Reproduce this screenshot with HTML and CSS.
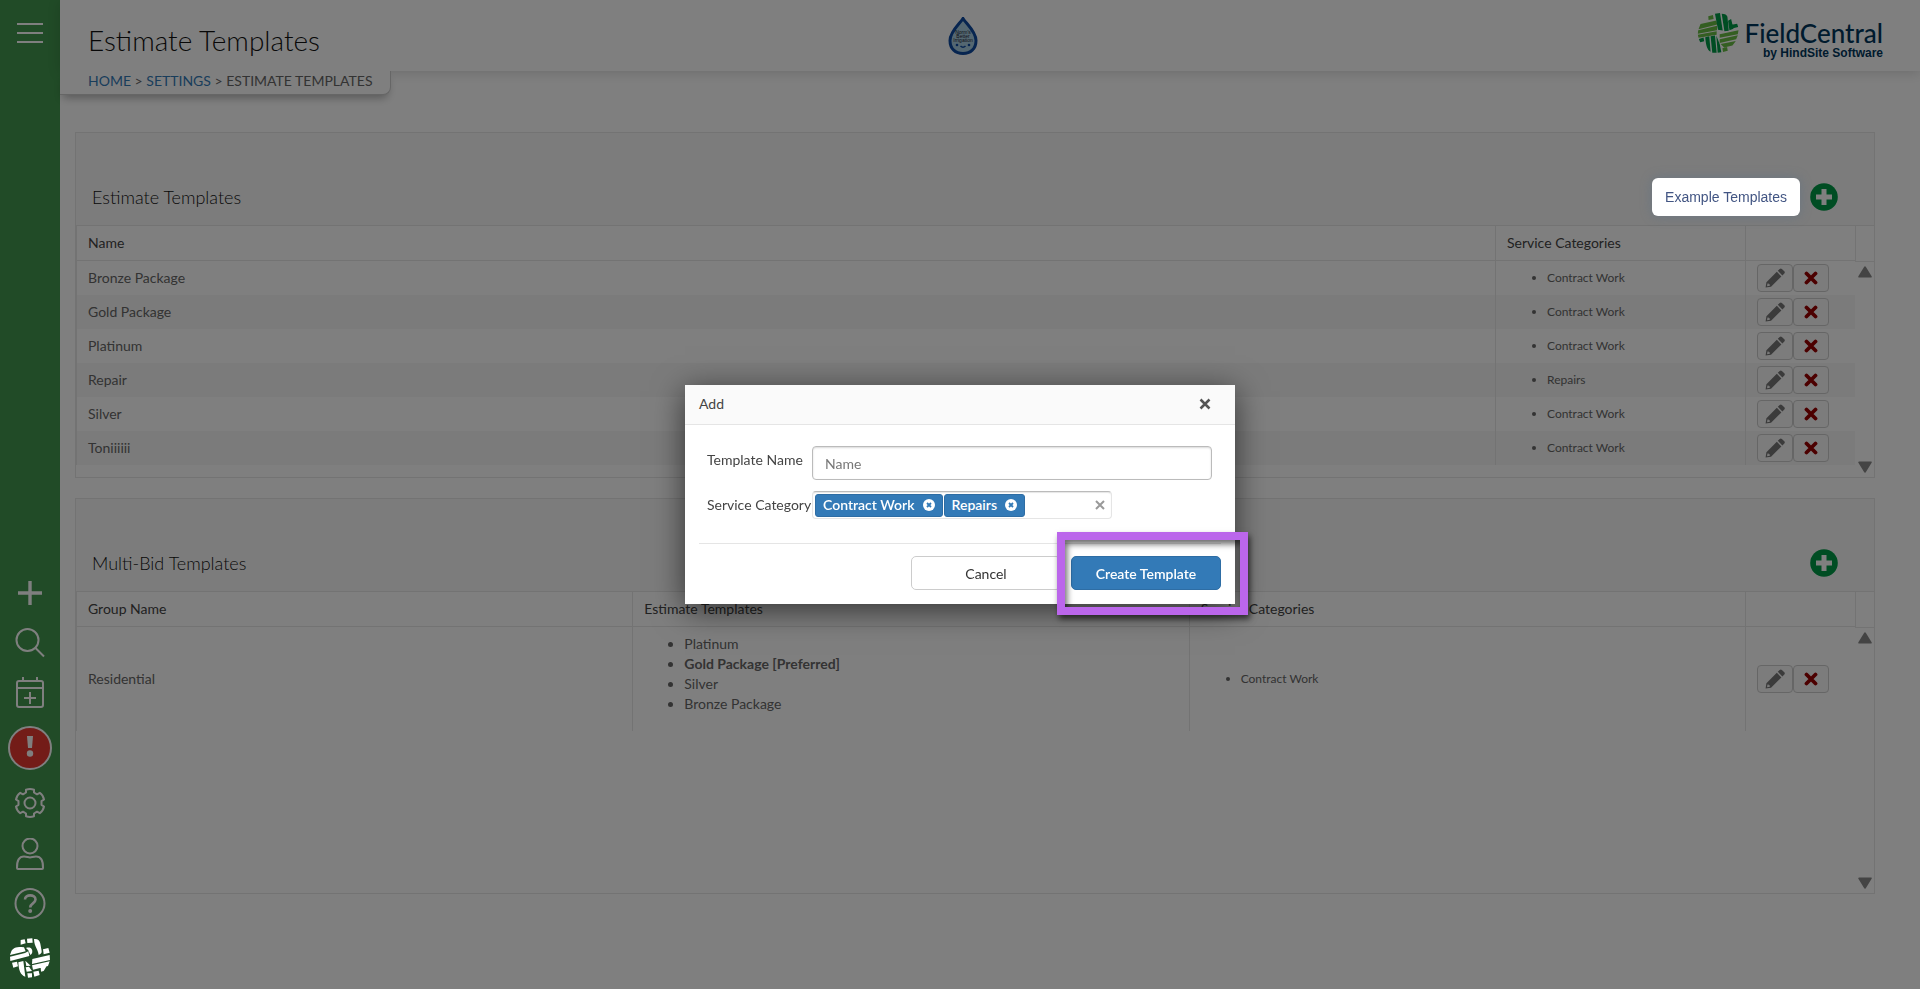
FILE: index.html
```html
<!DOCTYPE html>
<html lang="en">
<head>
  <meta charset="UTF-8">
  <title>Estimate Templates</title>
  <link rel="stylesheet" href="styles.css">
</head>
<body>

<!-- Shared icons -->
<svg class="sprite" width="0" height="0" aria-hidden="true">
  <symbol id="pencil" viewBox="0 0 20 20">
    <path d="M1.400 14.200 11.800 3.800l4.600 4.600L6 18.700l-5.400.8zM12.800 2.800l1.900-1.900c.7-.7 1.500-.7 2.200 0l2.400 2.400c.7.7.7 1.500 0 2.200l-1.900 1.900z"/>
    <path d="M2.500 15.400 2 18.200l2.800-.5v-1.500H3.700v-.8z" fill="#f7f7f7"/>
  </symbol>
  <symbol id="cross" viewBox="0 0 14 14">
    <path d="M2.500 2.500 11.500 11.500M11.500 2.500 2.500 11.500" stroke="#900" stroke-width="3.8" stroke-linecap="round"/>
  </symbol>
  <symbol id="add" viewBox="0 0 28 28">
    <circle cx="14" cy="14" r="13.8" fill="#009a47"/>
    <path d="M14 6v16M6 14h16" stroke="#fff" stroke-width="5"/>
  </symbol>
  <symbol id="remove" viewBox="0 0 12 12">
    <circle cx="6" cy="6" r="6" fill="#fff"/>
    <path d="M4 4l4 4M8 4 4 8" stroke="#337ab7" stroke-width="1.8"/>
  </symbol>
  <symbol id="up" viewBox="0 0 12 10">
    <path d="M6 1 11 9H1z" fill="#888" stroke="#888" stroke-width="1.6" stroke-linejoin="round"/>
  </symbol>
  <symbol id="down" viewBox="0 0 12 10">
    <path d="M6 9 11 1H1z" fill="#888" stroke="#888" stroke-width="1.6" stroke-linejoin="round"/>
  </symbol>
</svg>

<!-- Sidebar -->
<nav class="sidebar">
  <button class="side-btn" aria-label="Menu">
    <svg width="26" height="22" viewBox="0 0 26 22"><path d="M0 2h26M0 11h26M0 20h26"/></svg>
  </button>
  <div class="side-group">
    <button class="side-btn" aria-label="Add">
      <svg width="32" height="32" viewBox="0 0 32 32"><path d="M16 5v24M4 17h24" stroke-width="3.4"/></svg>
    </button>
    <button class="side-btn" aria-label="Search">
      <svg width="32" height="32" viewBox="0 0 32 32"><circle cx="13.500" cy="14" r="11"/><path d="M21.500 22l8.500 8.500"/></svg>
    </button>
    <button class="side-btn" aria-label="Schedule">
      <svg width="32" height="32" viewBox="0 0 32 32"><rect x="3" y="5" width="26" height="26" rx="2"/><path d="M3 12h26M9 1v4M23 1v4M16 16v12M10 22h12"/></svg>
    </button>
    <button class="side-btn" aria-label="Alerts">
      <svg width="44" height="44" viewBox="0 0 44 44"><circle cx="22" cy="22" r="21" fill="#e63930"/><path d="M19 10h6l-1 12h-4z" fill="#fff" stroke="none"/><circle cx="22" cy="27.500" r="3.200" fill="#fff" stroke="none"/></svg>
    </button>
    <button class="side-btn" aria-label="Settings">
      <svg width="32" height="32" viewBox="0 0 32 32" stroke-linejoin="round"><circle cx="16" cy="15" r="5.500"/><path d="M12 4.500V1.700q4-1.200 8 0v2.800l3 1.800 2.800-1.500q3.500 2.600 4.200 6.700l-2.500 1.700v3.600l2.500 1.700q-.7 4.100-4.200 6.700L23 23.700l-3 1.800v2.800q-4 1.200-8 0v-2.800l-3-1.800-2.800 1.500Q2.700 22.600 2 18.500l2.500-1.700v-3.600L2 11.500q.7-4.100 4.200-6.700L9 6.300z"/></svg>
    </button>
    <button class="side-btn" aria-label="Account">
      <svg width="32" height="32" viewBox="0 1 32 32"><circle cx="16" cy="9" r="7.500"/><path d="M3 31q-.3-11.500 7-11.500c3 0 4 1 6 1s3-1 6-1q7.300 0 7 11.500Q29 32 28 32H4Q3 32 3 31z"/></svg>
    </button>
    <button class="side-btn" aria-label="Help">
      <svg width="32" height="32" viewBox="0 0 32 32"><circle cx="16" cy="15.500" r="14.500"/><path d="M11 11.500c0-5.500 10.500-5.500 10.500 0 0 4-5.300 3.700-5.300 8" stroke-width="2.600"/><circle cx="16.200" cy="23" r="2" fill="#fff" stroke="none"/></svg>
    </button>
    <svg class="side-logo" width="40" height="40" viewBox="30 1134 120 120">
      <path d="M62 1140l12-2 3 12-15 4zM81 1136l16-1 1 13-16 1zM102 1137c12-1 17 4 19 14l4 22c1 7-4 9-9 12-2-20-13-22-14-48zM129 1168l16-4 4 14-18 5zM34 1174c4-9 12-13 30-13l8 1 5 12-47 11zM30 1190l45-11 10-5 3 14-57 15zM78 1164c7-2 13-2 17 3 4 7 2 15-4 18l-6-14zM97 1197l52-12 1 15-54 12zM96 1216l53-12-5 14-45 11zM36 1208l15-3 3 14-14 4zM55 1207l15-4 6 47c-15-4-20-20-21-43zM76 1202l16 15-13 1zM77 1222l10-2 9 13-16 2zM82 1240h14v12l-12 1zM100 1235l16-3 3 13-16 5zM122 1222l18-4-9 15-8 2z" fill="#fff"/>
    </svg>
  </div>
</nav>

<div class="page">
  <header class="topbar">
    <h1>Estimate Templates</h1>
    <svg class="drop" width="30" height="38" viewBox="0 0 30 38" role="img" aria-label="Company logo">
      <path d="M15 1.500c3 5 13 13 13 22C28 32 22.500 36.500 15 36.500S2 32 2 23.500C2 14.500 12 6.500 15 1.500z" fill="#a9cfe2" stroke="#0f4aa0" stroke-width="3"/>
      <g font-family="Liberation Sans" font-size="5" fill="#223" text-anchor="middle">
        <text x="15" y="17">Norm's</text><text x="15" y="21">Better</text><text x="15" y="25">Irrigation</text>
      </g>
      <circle cx="9" cy="28" r="1.300" fill="#0f4aa0"/><circle cx="21" cy="28" r="1.300" fill="#0f4aa0"/>
      <path d="M12.500 29q2.500 2.500 5 0" fill="none" stroke="#0f4aa0" stroke-width="1.500"/>
    </svg>
    <div class="brand">
      <svg width="42" height="40" viewBox="170 35 124 119">
        <path d="M203 45l14-4 2 12-15 3zM180 68l47-11 3 12-56 14zM173 86l56-13v13l-57 11zM237 98l56-12-2 12-54 11zM237 113l54-12-5 12-49 11zM240 127l45-9-10 14-25 6zM172 100l56-11v11l-54 9zM245 140l14-4 2 11-14 4z" fill="#69bd45"/>
        <path d="M223 37l15-2 8 52-14-2zM243 37c10 0 15 3 17 9l4 42-13 1zM262 58l9-5 7 29-12 4zM272 70l17-3 3 10-18 4zM175 112l14-4 2 11-12 3zM194 107l12-3 4 46c-10-5-14-18-16-43zM210 104l13-2 5 51h-13zM227 102l10 25 5 25-11 1z" fill="#009a47"/>
      </svg>
      <div class="brand-text">
        <span class="brand-name">FieldCentral</span>
        <span class="brand-sub">by HindSite Software</span>
      </div>
    </div>
  </header>
  <nav class="crumbs"><a href="#">HOME</a> &gt; <a href="#">SETTINGS</a> &gt; ESTIMATE TEMPLATES</nav>

  <main>
    <!-- Estimate templates -->
    <section class="panel">
      <div class="panel-head">
        <h2>Estimate Templates</h2>
        <button class="example-btn">Example Templates</button>
        <button class="add-btn" aria-label="Add template"><svg width="28" height="28"><use href="#add"/></svg></button>
      </div>
      <div class="grid">
        <div class="grid-main">
          <table>
            <colgroup><col><col class="col-cat"><col class="col-act"></colgroup>
            <thead><tr><th>Name</th><th>Service Categories</th><th></th></tr></thead>
            <tbody>
              <tr><td>Bronze Package</td><td><ul class="small"><li>Contract Work</li></ul></td><td><div class="actions"><button aria-label="Edit"><svg width="20" height="20"><use href="#pencil"/></svg></button><button aria-label="Delete"><svg width="14" height="14"><use href="#cross"/></svg></button></div></td></tr>
              <tr><td>Gold Package</td><td><ul class="small"><li>Contract Work</li></ul></td><td><div class="actions"><button aria-label="Edit"><svg width="20" height="20"><use href="#pencil"/></svg></button><button aria-label="Delete"><svg width="14" height="14"><use href="#cross"/></svg></button></div></td></tr>
              <tr><td>Platinum</td><td><ul class="small"><li>Contract Work</li></ul></td><td><div class="actions"><button aria-label="Edit"><svg width="20" height="20"><use href="#pencil"/></svg></button><button aria-label="Delete"><svg width="14" height="14"><use href="#cross"/></svg></button></div></td></tr>
              <tr><td>Repair</td><td><ul class="small"><li>Repairs</li></ul></td><td><div class="actions"><button aria-label="Edit"><svg width="20" height="20"><use href="#pencil"/></svg></button><button aria-label="Delete"><svg width="14" height="14"><use href="#cross"/></svg></button></div></td></tr>
              <tr><td>Silver</td><td><ul class="small"><li>Contract Work</li></ul></td><td><div class="actions"><button aria-label="Edit"><svg width="20" height="20"><use href="#pencil"/></svg></button><button aria-label="Delete"><svg width="14" height="14"><use href="#cross"/></svg></button></div></td></tr>
              <tr><td>Toniiiiii</td><td><ul class="small"><li>Contract Work</li></ul></td><td><div class="actions"><button aria-label="Edit"><svg width="20" height="20"><use href="#pencil"/></svg></button><button aria-label="Delete"><svg width="14" height="14"><use href="#cross"/></svg></button></div></td></tr>
            </tbody>
          </table>
        </div>
        <div class="scroller">
          <svg width="14" height="12"><use href="#up"/></svg>
          <svg width="14" height="12"><use href="#down"/></svg>
        </div>
      </div>
    </section>

    <!-- Multi-bid templates -->
    <section class="panel">
      <div class="panel-head">
        <h2>Multi-Bid Templates</h2>
        <button class="add-btn" aria-label="Add group"><svg width="28" height="28"><use href="#add"/></svg></button>
      </div>
      <div class="grid grid-tall">
        <div class="grid-main">
          <table>
            <colgroup><col><col><col><col class="col-act"></colgroup>
            <thead><tr><th>Group Name</th><th>Estimate Templates</th><th>Service Categories</th><th></th></tr></thead>
            <tbody>
              <tr>
                <td>Residential</td>
                <td><ul class="bids"><li>Platinum</li><li><b>Gold Package [Preferred]</b></li><li>Silver</li><li>Bronze Package</li></ul></td>
                <td><ul class="small"><li>Contract Work</li></ul></td>
                <td><div class="actions"><button aria-label="Edit"><svg width="20" height="20"><use href="#pencil"/></svg></button><button aria-label="Delete"><svg width="14" height="14"><use href="#cross"/></svg></button></div></td>
              </tr>
            </tbody>
          </table>
        </div>
        <div class="scroller">
          <svg width="14" height="12"><use href="#up"/></svg>
          <svg width="14" height="12"><use href="#down"/></svg>
        </div>
      </div>
    </section>
  </main>
</div>

<!-- Add dialog -->
<div class="backdrop"></div>
<div class="modal-wrap">
  <form class="modal" role="dialog" aria-labelledby="modalTitle">
    <div class="modal-head">
      <span id="modalTitle">Add</span>
      <button type="button" class="close-btn" aria-label="Close">
        <svg width="12" height="12" viewBox="0 0 12 12"><path d="M1.500 1.500l9 9M10.500 1.500l-9 9" stroke="#555" stroke-width="2.500"/></svg>
      </button>
    </div>
    <div class="modal-body">
      <div class="field">
        <label for="name">Template Name</label>
        <input id="name" class="name-input" type="text" placeholder="Name">
      </div>
      <div class="field">
        <label for="category">Service Category</label>
        <div class="multi">
          <span class="chip">Contract Work <button type="button" aria-label="Remove Contract Work"><svg width="12" height="12"><use href="#remove"/></svg></button></span>
          <span class="chip">Repairs <button type="button" aria-label="Remove Repairs"><svg width="12" height="12"><use href="#remove"/></svg></button></span>
          <input id="category" type="text">
          <button type="button" class="clear-btn" aria-label="Clear">
            <svg width="10" height="10" viewBox="0 0 10 10"><path d="M1 1l8 8M9 1 1 9" stroke="#999" stroke-width="2"/></svg>
          </button>
        </div>
      </div>
    </div>
    <div class="modal-foot">
      <button type="button" class="btn">Cancel</button>
      <button type="submit" class="btn btn-primary">Create Template</button>
    </div>
    <div class="highlight"></div>
  </form>
</div>

</body>
</html>
```
FILE: styles.css
```css
* {
  box-sizing: border-box;
}

body {
  margin: 0;
  display: flex;
  min-height: 100vh;
  font-family: Lato, sans-serif;
  font-size: 14px;
  line-height: 20px;
  color: #666;
  background-color: #fff;
}

button {
  padding: 0;
  border: none;
  background: none;
  font-family: inherit;
  font-size: 14px;
  color: inherit;
  cursor: pointer;
}

svg {
  display: block;
}

.sprite {
  position: absolute;
}

h1, h2 {
  margin: 0;
  font-weight: 300;
}

a {
  color: #337ab7;
  text-decoration: none;
}

/* Sidebar */
.sidebar {
  width: 60px;
  padding: 22px 0 11px;
  display: flex;
  flex-direction: column;
  align-items: center;
  justify-content: space-between;
  background-color: #42964e;
}

.side-group {
  display: flex;
  flex-direction: column;
  align-items: center;
  gap: 18px;
}

.side-btn svg {
  fill: none;
  stroke: #fff;
  stroke-width: 2;
}

.side-logo {
  position: relative;
  z-index: 20;
}

/* Header */
.page {
  flex: 1;
}

.topbar {
  height: 71px;
  padding: 0 37px 0 28px;
  display: grid;
  grid-template-columns: 19fr auto 20fr;
  align-items: center;
  box-shadow: 0 2px 12px rgba(0, 0, 0, 0.15);
}

.topbar h1 {
  padding-top: 8px;
  font-size: 28px;
  line-height: 36px;
  color: #111;
}

.brand {
  justify-self: end;
  display: flex;
  align-items: flex-start;
  gap: 6px;
}

.brand-text {
  display: flex;
  flex-direction: column;
  align-items: flex-end;
  padding-top: 6px;
  color: #00365c;
}

.brand-name {
  font-size: 26px;
  line-height: 28px;
  font-weight: 500;
}

.brand-sub {
  font-family: "Liberation Sans", sans-serif;
  font-size: 12px;
  line-height: 12px;
  font-weight: bold;
}

.crumbs {
  position: relative;
  width: fit-content;
  height: 24px;
  padding: 0 18px 0 28px;
  border: 1px solid #ccc;
  border-width: 0 1px 1px 0;
  border-radius: 0 0 8px 0;
  background-color: #fff;
  box-shadow: 0 6px 8px -3px rgba(0, 0, 0, 0.3);
}

/* Panels */
main {
  padding: 37px 45px 20px 15px;
  display: flex;
  flex-direction: column;
  gap: 20px;
}

.panel {
  border: 1px solid #e6e6e6;
}

.panel-head {
  height: 92px;
  padding: 44px 36px 9px 16px;
  display: flex;
  align-items: center;
  gap: 10px;
  background-color: #f9f9f9;
}

.panel-head h2 {
  flex: 1;
  font-size: 18px;
  color: #111;
}

.example-btn {
  position: relative;
  z-index: 20;
  height: 38px;
  padding: 0 13px;
  border-radius: 6px;
  background-color: #fff;
  font-family: "Liberation Sans", sans-serif;
  color: #425583;
  box-shadow: 0 0 12px rgba(80, 110, 140, 0.4);
}

.grid {
  display: flex;
  min-height: 252px;
  border-top: 1px solid #e6e6e6;
}

.grid-tall {
  min-height: 302px;
}

.grid-main {
  flex: 1;
}

table {
  width: 100%;
  table-layout: fixed;
  border-collapse: separate;
  border-spacing: 0;
}

.col-cat {
  width: 250px;
}

.col-act {
  width: 110px;
}

th, td {
  padding: 0 11px;
  border-left: 1px solid #e6e6e6;
  text-align: left;
}

th {
  height: 35px;
  border-bottom: 1px solid #e6e6e6;
  font-weight: 400;
  color: #444;
}

td {
  height: 34px;
}

tbody tr:nth-child(even) {
  background-color: #f6f6f6;
}

ul {
  margin: 0;
  padding-left: 40px;
}

.small {
  font-size: 12px;
}

.bids {
  margin: 7px 0 17px;
}

.actions {
  display: flex;
}

.actions button {
  width: 36px;
  height: 28px;
  display: flex;
  align-items: center;
  justify-content: center;
  border: 1px solid #ccc;
  border-radius: 4px;
  background-color: #f9f9f9;
  fill: #777;
}

.scroller {
  width: 19px;
  padding-bottom: 4px;
  display: flex;
  flex-direction: column;
  align-items: center;
  justify-content: space-between;
}

.scroller::before {
  content: "";
  width: 100%;
  height: 35px;
  margin-bottom: 4px;
  border-left: 1px solid #e6e6e6;
  border-bottom: 1px solid #e6e6e6;
}

.scroller svg:last-child {
  margin-top: auto;
}

/* Dialog */
.backdrop {
  position: fixed;
  inset: 0;
  z-index: 10;
  background-color: rgba(0, 0, 0, 0.5);
}

.modal-wrap {
  position: fixed;
  inset: 0;
  z-index: 30;
  display: flex;
  align-items: center;
  justify-content: center;
  pointer-events: none;
}

.modal {
  position: relative;
  width: 550px;
  background-color: #fff;
  color: #444;
  box-shadow: 0 6px 30px rgba(0, 0, 0, 0.6);
  pointer-events: auto;
}

.modal-head {
  height: 40px;
  padding: 0 24px 2px 14px;
  display: flex;
  align-items: center;
  justify-content: space-between;
  border-bottom: 1px solid #e5e5e5;
  background-color: #fafafa;
}

.modal-body {
  margin: 0 14px;
  padding: 21px 8px 24px;
  display: flex;
  flex-direction: column;
  gap: 11px;
  border-bottom: 1px solid #e5e5e5;
}

.field {
  display: flex;
}

.field label {
  width: 105px;
  padding-top: 4px;
  white-space: nowrap;
}

.name-input {
  width: 400px;
  height: 34px;
  padding: 0 12px;
  border: 1px solid #bbb;
  border-radius: 4px;
  font-family: inherit;
  font-size: 14px;
  box-shadow: inset 0 1px 2px rgba(0, 0, 0, 0.15);
}

.name-input::placeholder {
  color: #777;
}

.multi {
  width: 300px;
  height: 28px;
  padding: 0 6px 0 2px;
  display: flex;
  align-items: center;
  gap: 1px;
  border: 1px solid #e5e5e5;
  border-top-color: #bbb;
  border-radius: 4px;
  box-shadow: inset 0 1px 1px rgba(0, 0, 0, 0.1);
}

.multi input {
  flex: 1;
  min-width: 0;
  border: none;
  background: none;
  outline: none;
}

.chip {
  height: 23px;
  padding: 0 7px;
  display: flex;
  align-items: center;
  gap: 8px;
  border: 1px solid #2e6da4;
  border-radius: 3px;
  background-color: #337ab7;
  color: #fff;
  font-weight: 600;
  white-space: nowrap;
}

.modal-foot {
  padding: 12px 14px 14px;
  display: flex;
  justify-content: flex-end;
  gap: 10px;
}

.btn {
  width: 150px;
  height: 34px;
  border: 1px solid #ccc;
  border-radius: 5px;
  background-color: #fff;
  color: #333;
}

.btn-primary {
  border-color: #2e6da4;
  background-color: #337ab7;
  color: #fff;
  font-weight: 600;
}

.highlight {
  position: absolute;
  right: -13px;
  bottom: -11px;
  width: 191px;
  height: 83px;
  border: 8px solid #bb66eb;
  box-shadow: 2px 4px 6px rgba(0, 0, 0, 0.6), inset 2px 4px 6px rgba(0, 0, 0, 0.6);
  pointer-events: none;
}
```
